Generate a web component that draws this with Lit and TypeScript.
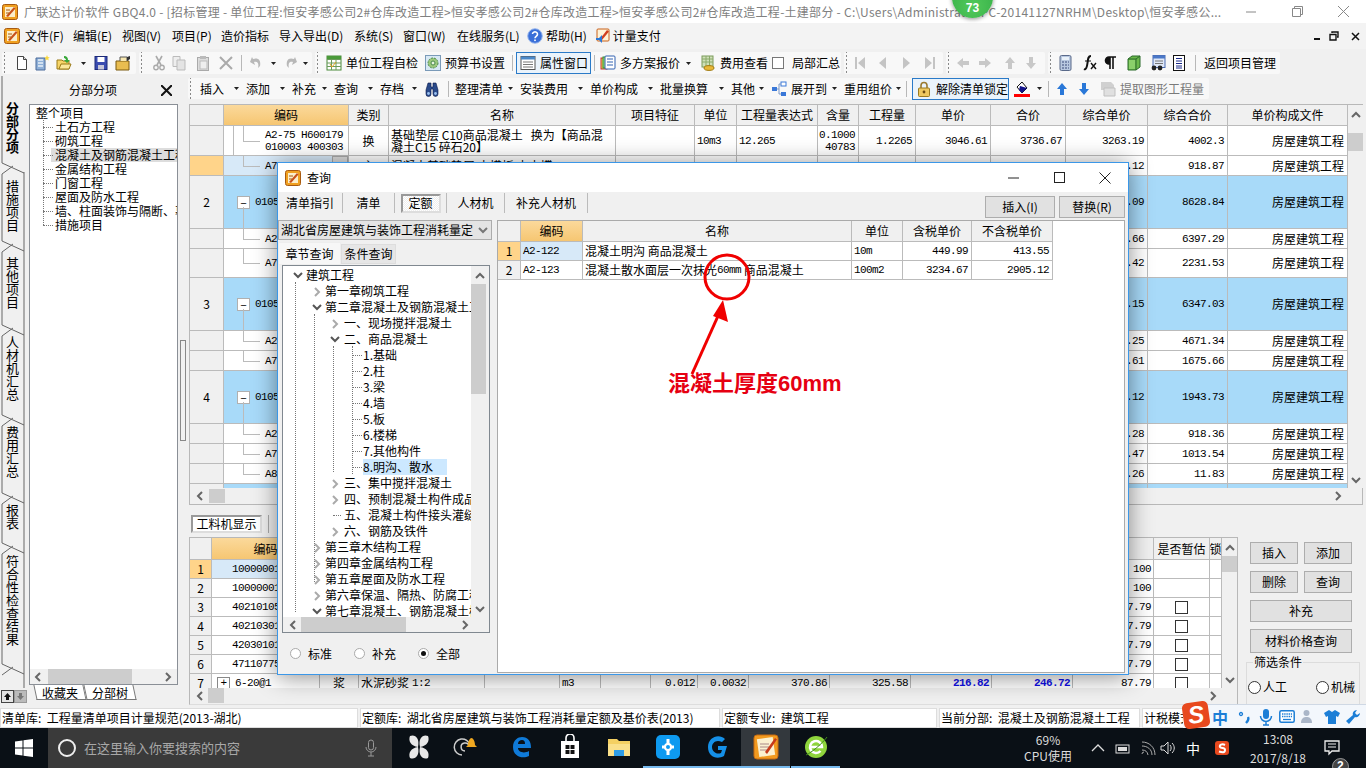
import { LitElement, html, svg, css } from 'lit';
import { customElement } from 'lit/decorators.js';

const box = (s: number, body: unknown) => html`<svg class="ic" width=${s} height=${s} viewBox="0 0 16 16">${body}</svg>`;
const chevR = (c = '#666') => html`<svg class="ch" width="8" height="10" viewBox="0 0 8 10"><path d="M2 1l4 4-4 4" fill="none" stroke=${c} stroke-width="2"/></svg>`;
const chevL = (c = '#666') => html`<svg class="ch" width="8" height="10" viewBox="0 0 8 10"><path d="M6 1L2 5l4 4" fill="none" stroke=${c} stroke-width="2"/></svg>`;
const chevD = (c = '#666') => html`<svg class="ch" width="10" height="8" viewBox="0 0 10 8"><path d="M1 2l4 4 4-4" fill="none" stroke=${c} stroke-width="2"/></svg>`;
const chevU = (c = '#666') => html`<svg class="ch" width="10" height="8" viewBox="0 0 10 8"><path d="M1 6l4-4 4 4" fill="none" stroke=${c} stroke-width="2"/></svg>`;
const arrow = html`<svg class="ar" width="5" height="3" viewBox="0 0 5 3"><path d="M0 0h5L2.5 3z" fill="#222"/></svg>`;

const appIcon = html`<svg class="ic" width="16" height="16" viewBox="0 0 16 16"><rect x=".5" y=".5" width="15" height="15" rx="2" fill="#f0a020" stroke="#a85a10"/><rect x="3" y="3" width="10" height="10" fill="#fbeecb"/><path d="M4 12l8-9 1.5 1.5L6 13z" fill="#c8501a"/><path d="M4 6h4M4 9h3" stroke="#a85a10"/></svg>`;
const ic = {
  doc: box(16, svg`<path d="M3.5 1.5h6l3 3v10h-9z" fill="#fff" stroke="#444"/><path d="M9.5 1.5v3h3" fill="#ddd" stroke="#444"/>`),
  bld: box(16, svg`<path d="M2 3h9v12H2z" fill="#8fb0d8" stroke="#4a6a9a"/><path d="M4 5h5M4 8h5M4 11h5" stroke="#e8f0f8" stroke-width="1.4"/><path d="M13 0l.8 2 2 .4-1.6 1.2.6 2-1.8-1-1.8 1 .6-2-1.6-1.2 2-.4z" fill="#f8d840"/>`),
  open: box(16, svg`<path d="M1 5h5l1 1h6v8H1z" fill="#f7d568" stroke="#9a7a18"/><path d="M3 14l2-5h10l-2 5z" fill="#fbe89a" stroke="#9a7a18"/><path d="M8 1c3 0 4 2 4 4h2l-3 3-3-3h2c0-1-1-2-2-2z" fill="#39a83a"/>`),
  save: box(16, svg`<rect x="2" y="1.5" width="12" height="13" fill="#3a4cb0" stroke="#1c2a78"/><rect x="4.5" y="2" width="7" height="5" fill="#fff"/><rect x="5" y="10" width="6" height="4.5" fill="#c8c8d8"/>`),
  folder: box(16, svg`<path d="M1 6h13v9H1z" fill="#e9bd50" stroke="#7a5a10"/><path d="M5 6V2h7v4" fill="#f8e8b0" stroke="#555"/><path d="M12 2l3-1v3l-3 2z" fill="#333"/>`),
  cut: box(16, svg`<path d="M5 1l5 9M11 1L6 10" stroke="#aaa" stroke-width="1.6"/><circle cx="5" cy="12.5" r="2.2" fill="none" stroke="#aaa" stroke-width="1.4"/><circle cx="11" cy="12.5" r="2.2" fill="none" stroke="#aaa" stroke-width="1.4"/>`),
  copy: box(16, svg`<path d="M2 1.5h7v10H2z" fill="#eee" stroke="#bbb"/><path d="M6 5h8v10H6z" fill="#e4e4e4" stroke="#bbb"/>`),
  paste: box(16, svg`<rect x="2.5" y="2.5" width="11" height="13" fill="#ddd" stroke="#aaa"/><rect x="5" y="1" width="6" height="3" fill="#bbb"/><rect x="5" y="6" width="7" height="8" fill="#eee" stroke="#bbb"/>`),
  del: box(16, svg`<path d="M2 2l12 12M14 2L2 14" stroke="#aaa" stroke-width="2"/>`),
  undo: box(16, svg`<path d="M5 4c6-2 8 2 7 7l-2 2c1-4 0-7-4-6l1 3-5-3 2-5z" fill="#b8b8b8"/>`),
  redo: box(16, svg`<path d="M11 4C5 2 3 6 4 11l2 2c-1-4 0-7 4-6l-1 3 5-3-2-5z" fill="#b8b8b8"/>`),
  table: box(16, svg`<rect x="1" y="1" width="14" height="14" fill="#fff" stroke="#4a8a3a"/><path d="M1 4.5h14M1 8h14M1 11.5h14M5.5 4v11M10 4v11" stroke="#6a9a5a"/><rect x="1" y="1" width="14" height="3" fill="#4a9a3a"/><path d="M4 9l2 3 4-5" stroke="#e0a020" fill="none"/>`),
  gear: box(16, svg`<rect x=".5" y=".5" width="15" height="15" fill="#d8e8f4" stroke="#7a9ab8"/><circle cx="8" cy="8" r="5" fill="#9cc87c" stroke="#4a8a4a" stroke-dasharray="2 1"/><circle cx="8" cy="8" r="2" fill="#e8f4e0" stroke="#4a8a4a"/>`),
  prop: box(16, svg`<rect x="1" y="1.5" width="14" height="13" fill="#fff" stroke="#555"/><rect x="1" y="1.5" width="14" height="3" fill="#4a88c8"/><path d="M3 7h10M3 9.5h10M3 12h10" stroke="#777"/>`),
  plan: box(16, svg`<rect x="1" y="3" width="6" height="11" fill="#f4d060" stroke="#c03030"/><rect x="3" y="2" width="6" height="11" fill="#a0e080" stroke="#309030"/><rect x="5" y="1" width="10" height="13" rx="1" fill="#fff" stroke="#3060b0"/><path d="M7 4h6M7 7h6M7 10h6" stroke="#3060b0"/>`),
  fee: box(16, svg`<rect x="2" y="1" width="11" height="11" fill="#cfe0b8" stroke="#7a9a5a"/><path d="M2 4h11M2 7h11M6 1v11M9.5 1v11" stroke="#8aaa6a"/><ellipse cx="9" cy="13" rx="5" ry="2.4" fill="#e8b838" stroke="#a07a10"/>`),
  first: box(16, svg`<path d="M3 2h2v12H3z M13 2v12L6 8z" fill="#c4c4c4"/>`),
  prev: box(16, svg`<path d="M11 2v12L4 8z" fill="#c4c4c4"/>`),
  next: box(16, svg`<path d="M5 2v12l7-6z" fill="#c4c4c4"/>`),
  last: box(16, svg`<path d="M11 2h2v12h-2z M3 2v12l7-6z" fill="#c4c4c4"/>`),
  aL: box(16, svg`<path d="M8 3L2 8l6 5v-3h6V6H8z" fill="#c8c8c8"/>`),
  aR: box(16, svg`<path d="M8 3l6 5-6 5v-3H2V6h6z" fill="#c8c8c8"/>`),
  aU: box(16, svg`<path d="M8 2l5 6h-3v6H6V8H3z" fill="#c8c8c8"/>`),
  aD: box(16, svg`<path d="M8 14l5-6h-3V2H6v6H3z" fill="#c8c8c8"/>`),
  calc: box(16, svg`<rect x="3" y="0.5" width="11" height="15" rx="1.5" fill="#b8c8e0" stroke="#5a6a8a"/><rect x="5" y="2" width="7" height="3" fill="#e8f0f8"/><path d="M5 7h2M8 7h2M11 7h1M5 10h2M8 10h2M11 10h1M5 13h2M8 13h2M11 13h1" stroke="#3a4a7a"/>`),
  fx: box(16, svg`<path d="M9 1C6 1 6 4 5.5 8S4 15 2 14" fill="none" stroke="#111" stroke-width="2"/><path d="M3 6h6" stroke="#111"/><path d="M9 8l5 6M14 8l-5 6" stroke="#111" stroke-width="1.4"/>`),
  para: box(16, svg`<path d="M7 14V2H6a3.5 3.5 0 000 7h1zM10 2v12M6 2h7" fill="#111" stroke="#111" stroke-width="1.6"/>`),
  book: box(16, svg`<path d="M2 4l4-3h8v11l-4 3H2z" fill="#6ab84a" stroke="#2a6a2a"/><path d="M2 4h8v11M10 4l4-3" fill="none" stroke="#2a6a2a"/><rect x="3" y="5" width="6" height="9" fill="#8ad06a"/>`),
  form: box(16, svg`<rect x="3" y="0.5" width="12" height="12" fill="#dfe8f8" stroke="#4a6ab0"/><rect x="3" y="0.5" width="12" height="3" fill="#4a78c8"/><path d="M5 6h8M5 8.5h8" stroke="#777"/><circle cx="4" cy="13" r="2.4" fill="#222"/><circle cx="10" cy="13" r="2.4" fill="#222"/>`),
  list: box(16, svg`<rect x="2.5" y=".5" width="11" height="15" fill="#fff" stroke="#111"/><path d="M5 3.5h6M5 6h6M5 8.5h6M5 11h6M5 13h6" stroke="#1a2a8a"/>`),
  binoc: box(16, svg`<path d="M2 9l2-7h3v4h2V2h3l2 7v4a2 2 0 01-5 0V8H7v5a2 2 0 01-5 0z" fill="#2a4a8a" stroke="#0a1a4a" stroke-width=".6"/><circle cx="4.5" cy="12.5" r="1.4" fill="#9ac0f0"/><circle cx="11.5" cy="12.5" r="1.4" fill="#9ac0f0"/>`),
  tree: box(16, svg`<rect x="1" y="6" width="5" height="4" fill="#3a78d8"/><rect x="10" y="1" width="5" height="4" fill="#fff" stroke="#3a78d8"/><rect x="10" y="11" width="5" height="4" fill="#3a78d8"/><path d="M6 8h2V3h2M8 8v5h2" fill="none" stroke="#7a98c8"/>`),
  lock: box(16, svg`<path d="M5 7V4.5a3 3 0 016 0V7" fill="none" stroke="#9a7a30" stroke-width="1.6"/><rect x="2.5" y="7" width="11" height="8.5" rx="1" fill="#eec860" stroke="#9a7a20"/><circle cx="8" cy="11" r="1.4" fill="#6a4a10"/>`),
  paint: box(16, svg`<path d="M3 6l5-5 5 6-5 5z" fill="#fff" stroke="#111"/><path d="M6 5l7 2-5 5-3-3z" fill="#14148a"/><rect x="0" y="13" width="16" height="3" fill="#f00"/>`),
  up: box(16, svg`<path d="M8 2l5 6h-3v6H6V8H3z" fill="#2a78d8"/>`),
  down: box(16, svg`<path d="M8 14l5-6h-3V2H6v6H3z" fill="#2a78d8"/>`),
  extract: box(16, svg`<path d="M1 1h10l3 3v5H1z" fill="#d0d0d0"/><path d="M4 7h11v8H4z" fill="#e0e0e0" stroke="#c0c0c0"/>`),
  help: box(16, svg`<circle cx="8" cy="8" r="7.3" fill="#3a6fd8" stroke="#9ab8ee"/><path d="M5.5 6a2.5 2.3 0 114 2c-1 .8-1.5 1-1.5 2.3" fill="none" stroke="#fff" stroke-width="1.6"/><rect x="7.2" y="11.5" width="1.6" height="1.6" fill="#fff"/>`),
  pay: box(16, svg`<rect x="2" y="1" width="12" height="12" rx="1" fill="#fff3d8" stroke="#c8601a"/><path d="M5 11l7-9 2 1.5L7 12z" fill="#d04020"/><path d="M1 10h3l3-3v8l-3-3H1z" fill="#2a78d8"/>`),
};

type Tb = { w: number; k?: string; i?: unknown; t?: string; a?: boolean };
const row1a: Tb[] = [
  { w: 9, k: 'grip' }, { w: 20, i: ic.doc }, { w: 22, i: ic.bld }, { w: 21, i: ic.open }, { w: 16, k: 'only', a: true }, { w: 22, i: ic.save }, { w: 24, i: ic.folder },
];
const row1b: Tb[] = [
  { w: 9, k: 'grip' }, { w: 20, i: ic.cut }, { w: 24, i: ic.copy }, { w: 23, i: ic.paste }, { w: 22, i: ic.del }, { w: 8, k: 'sep' }, { w: 18, i: ic.undo }, { w: 17, k: 'only', a: true }, { w: 19, i: ic.redo }, { w: 13, k: 'only', a: true },
];
const row1c: Tb[] = [
  { w: 8, k: 'grip' }, { w: 99, i: ic.table, t: '单位工程自检' }, { w: 86, i: ic.gear, t: '预算书设置' }, { w: 8, k: 'sep' },
  { w: 75, k: 'on', i: ic.prop, t: '属性窗口' }, { w: 6, k: 'sep' }, { w: 98, i: ic.plan, t: '多方案报价', a: true }, { w: 2, k: 'gap' }, { w: 73, i: ic.fee, t: '费用查看' }, { w: 19, k: 'cbw' }, { w: 52, t: '局部汇总' },
];
const row1d: Tb[] = [{ w: 5, k: 'grip' }, { w: 23, i: ic.first }, { w: 23, i: ic.prev }, { w: 24, i: ic.next }, { w: 24, i: ic.last }];
const row1e: Tb[] = [{ w: 6, k: 'grip' }, { w: 22, i: ic.aL }, { w: 25, i: ic.aR }, { w: 21, i: ic.aU }, { w: 25, i: ic.aD }];
const row1f: Tb[] = [
  { w: 6, k: 'grip' }, { w: 25, i: ic.calc }, { w: 21, i: ic.fx }, { w: 23, i: ic.para }, { w: 24, i: ic.book }, { w: 21, i: ic.form }, { w: 22, i: ic.list }, { w: 11, k: 'sep' }, { w: 79, t: '返回项目管理' },
];
const row2: Tb[] = [
  { w: 9, k: 'grip' }, { w: 46, t: '插入', a: true }, { w: 46, t: '添加', a: true }, { w: 42, t: '补充', a: true }, { w: 46, t: '查询', a: true }, { w: 44, t: '存档', a: true }, { w: 23, i: ic.binoc }, { w: 8, k: 'sep' },
  { w: 65, t: '整理清单', a: true }, { w: 70, t: '安装费用', a: true }, { w: 70, t: '单价构成', a: true }, { w: 71, t: '批量换算', a: true }, { w: 40, t: '其他', a: true },
  { w: 73, i: ic.tree, t: '展开到', a: true }, { w: 60, t: '重用组价', a: true }, { w: 11, k: 'sep' },
  { w: 97, k: 'on', i: ic.lock, t: '解除清单锁定' }, { w: 2, k: 'gap' }, { w: 21, i: ic.paint }, { w: 14, k: 'only', a: true }, { w: 5, k: 'sep' }, { w: 22, i: ic.up }, { w: 22, i: ic.down }, { w: 2, k: 'gap' }, { w: 112, k: 'dis', i: ic.extract, t: '提取图形工程量' },
];

const renderTb = (list: Tb[]) => list.map((it) => html`<div class="ti ${it.k ?? ''}" style="width:${it.w}px">${it.i ?? ''}${it.t ? html`<span>${it.t}</span>` : ''}${it.k === 'cbw' ? html`<i class="cb"></i>` : ''}${it.a ? arrow : ''}</div>`);

const menus = [
  ['文件(F)', 48], ['编辑(E)', 49], ['视图(V)', 50], ['项目(P)', 49], ['造价指标', 58], ['导入导出(D)', 75], ['系统(S)', 49], ['窗口(W)', 54], ['在线服务(L)', 72],
] as const;

type Row = { h: number; kind: 'top' | 'sel' | 'par' | 'kid'; rn?: string; code: string; type?: string; name?: string; unit?: string; expr?: string; qty?: string; amt?: string; p?: string; s?: string; cp: string; ct: string };
const rows: Row[] = [
  { h: 30, kind: 'top', code: 'A2-75 H600179\n010003 400303', type: '换', name: '基础垫层 C10商品混凝土\u00a0\u00a0\u00a0换为【商品混凝土C15 碎石20】', unit: '10m3', expr: '12.265', qty: '0.1000\n40783', amt: '1.2265', p: '3046.61', s: '3736.67', cp: '3263.19', ct: '4002.3' },
  { h: 20, kind: 'sel', code: 'A7-1', type: '主', name: '混凝土基础垫层 木模板 木支撑', cp: '813.12', ct: '918.87' },
  { h: 53, kind: 'par', rn: '2', code: '010501', cp: '7636.09', ct: '8628.84' },
  { h: 20, kind: 'kid', code: 'A2-1', cp: '5661.66', ct: '6397.29' },
  { h: 29, kind: 'kid', code: 'A7-2', cp: '1974.42', ct: '2231.53' },
  { h: 53, kind: 'par', rn: '3', code: '010501', cp: '5616.15', ct: '6347.03' },
  { h: 20, kind: 'kid', code: 'A2-2', cp: '4133.25', ct: '4671.34' },
  { h: 20, kind: 'kid', code: 'A7-3', cp: '1482.61', ct: '1675.66' },
  { h: 53, kind: 'par', rn: '4', code: '010501', cp: '1720.12', ct: '1943.73' },
  { h: 20, kind: 'kid', code: 'A2-3', cp: '812.28', ct: '918.36' },
  { h: 20, kind: 'kid', code: 'A7-4', cp: '896.47', ct: '1013.54' },
  { h: 20, kind: 'kid', code: 'A8-1', cp: '10.26', ct: '11.83' },
  { h: 53, kind: 'par', rn: '5', code: '010501', cp: '', ct: '' },
];
const mainHead = ['', '编码', '类别', '名称', '项目特征', '单位', '工程量表达式', '含量', '工程量', '单价', '合价', '综合单价', '综合合价', '单价构成文件'];

const lowCodes = ['10000001', '10000001', '40210105', '40210301', '42030101', '47110775'];
const tree0 = ['土石方工程', '砌筑工程', '混凝土及钢筋混凝土工程', '金属结构工程', '门窗工程', '屋面及防水工程', '墙、柱面装饰与隔断、幕墙工程', '措施项目'];
const dlgTree: [number, 'd' | 'r' | '', string, boolean?][] = [
  [0, 'd', '建筑工程'], [1, 'r', '第一章砌筑工程'], [1, 'd', '第二章混凝土及钢筋混凝土工程'], [2, 'r', '一、现场搅拌混凝土'], [2, 'd', '二、商品混凝土'],
  [3, '', '1.基础'], [3, '', '2.柱'], [3, '', '3.梁'], [3, '', '4.墙'], [3, '', '5.板'], [3, '', '6.楼梯'], [3, '', '7.其他构件'], [3, '', '8.明沟、散水', true],
  [2, 'r', '三、集中搅拌混凝土'], [2, 'r', '四、预制混凝土构件成品'], [2, '', '五、混凝土构件接头灌缝'], [2, 'r', '六、钢筋及铁件'],
  [1, 'r', '第三章木结构工程'], [1, 'r', '第四章金属结构工程'], [1, 'r', '第五章屋面及防水工程'], [1, 'r', '第六章保温、隔热、防腐工程'], [1, 'd', '第七章混凝土、钢筋混凝土模板'],
];
const vTabs: [string, number, boolean?][] = [['分部分项', 63, true], ['措施项目', 94], ['其他项目', 60], ['人材机汇总', 110], ['费用汇总', 58], ['报表', 72], ['符合性检查结果', 94]];

@customElement('app-root')
export class AppRoot extends LitElement {
  static styles = css`
    :host { display: block; width: 1366px; height: 768px; overflow: hidden; font: 12px/16px 'Noto Sans CJK SC', 'Liberation Sans', sans-serif; color: #000; }
    .app { position: relative; width: 1366px; height: 768px; display: flex; flex-direction: column; background: #f0f0f0; overflow: hidden; }
    .ic, .ch, .ar { display: block; flex: none; }
    .mono { font-family: 'Liberation Mono', monospace; font-size: 11px; letter-spacing: -.6px; }

    .title { height: 23px; flex: none; background: #fff; display: flex; align-items: center; color: #808080; white-space: nowrap; font-size: 12px; letter-spacing: .27px; padding-left: 2px; }
    .title .t { margin-left: 6px; width: 1210px; overflow: hidden; }
    .winbtns { display: flex; margin-left: auto; }
    .winbtns div { width: 46px; height: 23px; display: flex; align-items: center; justify-content: center; }
    .menu { height: 26px; flex: none; display: flex; align-items: center; padding-left: 4px; background: #f3f3f3; white-space: nowrap; }
    .menu .m { flex: none; }
    .menu .first { margin-left: 5px; width: 48px; }
    .menu .hp { display: flex; gap: 3px; align-items: center; margin-left: -2px; }
    .menu .pay { margin-left: 8px; display: flex; gap: 2px; align-items: center; }
    .menu .mdi { margin-left: auto; display: flex; align-items: center; gap: 8px; padding-right: 6px; }
    .bar1 { height: 27px; flex: none; display: flex; padding: 3px 0 2px 2px; gap: 3px; box-sizing: border-box; }
    .grp { display: flex; align-items: center; background: #f8f8f8; border-radius: 2px; height: 22px; flex: none; }
    .ti { flex: none; height: 100%; display: flex; align-items: center; gap: 4px; padding-left: 3px; box-sizing: border-box; white-space: nowrap; }
    .ti.only { padding-left: 2px; }
    .ti .ar { margin-left: auto; margin-right: 4px; }
    .ti.grip { background: radial-gradient(circle, #888 .8px, transparent 1.1px) 1px 2px / 3px 4px repeat-y; }
    .ti.sep { justify-content: center; padding: 0; }
    .ti.sep::after { content: ''; width: 1px; height: 16px; background: #b8b8b8; }
    .ti.gap { padding: 0; }
    .ti.on { border: 1px solid #2a7ac8; background: #eaf3fb; padding-left: 3px; height: 22px; }
    .ti.dis { color: #7a7a7a; }
    .ti.cbw { padding-left: 2px; }
    .cb { display: block; flex: none; width: 10px; height: 10px; border: 1px solid #777; background: #fff; }

    .work { flex: 1; min-height: 0; display: flex; }
    .leftc { width: 188px; flex: none; display: flex; position: relative; }
    .vtabs { width: 26px; flex: none; position: relative; padding-top: 20px; box-sizing: border-box; }
    .vtabs > svg { position: absolute; left: 0; top: 0; }
    .vt { display: flex; align-items: center; justify-content: center; font-size: 13px; line-height: 13px; writing-mode: vertical-rl; text-orientation: upright; width: 25px; position: relative; }
    .vt.a { font-weight: 700; }
    .navbtn { position: absolute; left: 1px; bottom: 5px; display: flex; }
    .navbtn div { width: 11px; height: 11px; background: #e4e4e4; border: 1px solid #444; display: flex; align-items: center; justify-content: center; }
    .navbtn div + div { background: #bbb; border-color: #999; }
    .panel { width: 154px; flex: none; display: flex; flex-direction: column; }
    .phead { height: 28px; flex: none; display: flex; align-items: center; justify-content: center; position: relative; padding-right: 20px; box-sizing: border-box; }
    .phead svg { position: absolute; right: 8px; top: 9px; }
    .ptree { width: 149px; margin-left: 3px; height: 581px; flex: none; box-sizing: border-box; border: 1px solid #8a8f96; background: #fff; display: flex; flex-direction: column; }
    .ptbody { flex: 1; overflow: hidden; position: relative; padding: 1px 0 0 6px; white-space: nowrap; }
    .ptbody .r { height: 14px; line-height: 14px; }
    .ptbody .k { padding-left: 19px; position: relative; height: 14px; line-height: 14px; }
    .ptbody .k::before { content: ''; position: absolute; left: 7px; top: 7px; width: 10px; border-top: 1px dotted #777; }
    .ptbody .k::after { content: ''; position: absolute; left: 7px; top: -7px; height: 14px; border-left: 1px dotted #777; }
    .ptbody .k.hl { background: linear-gradient(#ddd, #ddd) 15px 0 no-repeat; }
    .hs { height: 15px; flex: none; background: #f0f0f0; display: flex; align-items: center; position: relative; }
    .vs { width: 15px; flex: none; background: #f0f0f0; position: relative; display: flex; flex-direction: column; align-items: center; justify-content: space-between; padding: 6px 0 4px; box-sizing: border-box; }
    .thumb { position: absolute; background: #cdcdcd; }
    .btabs { display: flex; height: 17px; padding-left: 9px; }
    .btabs div { border: 1px solid #777; border-top: none; padding: 0 6px; font-size: 12px; line-height: 15px; transform: skewX(12deg); background: #fff; height: 15px; box-sizing: border-box; }
    .btabs div span { display: block; transform: skewX(-12deg); }
    .split { position: absolute; left: 180px; top: 264px; width: 4px; height: 99px; border: 1px solid #888; background: #f0f0f0; }

    .rightc { flex: 1; min-width: 0; display: flex; flex-direction: column; }
    .bar2 { height: 28px; flex: none; padding-top: 2px; box-sizing: border-box; }
    .bar2 .grp { width: 1021px; height: 21px; }
    .mframe { height: 401px; flex: none; margin-left: 1px; margin-right: 3px; box-sizing: border-box; border: 1px solid #b8b8b8; display: flex; flex-direction: column; }
    .mbody { height: 383px; flex: none; display: flex; }
    .gridm { width: 1158px; flex: none; overflow: hidden; background: #fff; }
    .grow { display: grid; grid-template-columns: 34px 125px 40px 227px 79px 42px 81px 41px 57px 75px 75px 82px 80px 120px; box-sizing: border-box; }
    .c { border-right: 1px solid #bbb; border-bottom: 1px solid #bbb; box-sizing: border-box; display: flex; align-items: center; overflow: hidden; padding: 0 2px; white-space: pre-line; position: relative; min-width: 0; }
    .c.hd { background: #f0f0f0; justify-content: center; white-space: nowrap; }
    .c.ora { background: linear-gradient(#fbd99b, #f6c672); }
    .c.rn { background: #f0f0f0; justify-content: center; }
    .c.rn.ora { background: #ffd48a; }
    .c.nm { line-height: 12px; }
    .c.ctr { justify-content: center; }
    .c.rt { justify-content: flex-end; text-align: right; padding-right: 3px; }
    .c.blue { background: #a8daf9; }
    .c.pale { background: #d7e9f8; }
    .c.num { line-height: 12px; }
    .tl { position: absolute; background: #bbb; }
    .exp { position: absolute; left: 13px; top: 50%; margin-top: -6px; width: 11px; height: 11px; background: #fff; border: 1px solid #b0b0b0; display: flex; align-items: center; justify-content: center; font-size: 11px; line-height: 10px; }
    .celbtn { position: absolute; right: 0; top: 0; width: 14px; height: 6px; background: #ddd; border: 1px solid #aaa; }

    .ltabs { height: 32px; flex: none; display: flex; align-items: flex-end; padding: 0 0 4px 3px; box-sizing: border-box; gap: 6px; }
    .pressed { background: #fff; border: 2px solid #999; border-right-color: #ddd; border-bottom-color: #ddd; box-sizing: border-box; display: flex; align-items: center; justify-content: center; }
    .ltabs .pressed { width: 71px; height: 18px; }
    .ltabs .vl { width: 1px; height: 18px; background: #aaa; }
    .lower { flex: 1; min-height: 0; display: flex; }
    .lframe { width: 1049px; height: 168px; margin-left: 1px; flex: none; box-sizing: border-box; border: 1px solid #b8b8b8; border-bottom-color: #ddd; display: flex; flex-direction: column; }
    .lbody { height: 150px; flex: none; display: flex; }
    .gridl { width: 1032px; flex: none; overflow: hidden; background: #fff; }
    .lrow { display: grid; grid-template-columns: 22px 108px 39px 126px 75px 41px 50px 47px 51px 81px 81px 81px 81px 81px 56px 12px; height: 19px; }
    .lrow.hd { height: 22px; }
    .lrow .c { padding: 0 2px; white-space: nowrap; }
    .c.bl { color: #1010e8; font-weight: 700; }
    .plus { width: 11px; height: 11px; border: 1px solid #888; display: flex; align-items: center; justify-content: center; line-height: 10px; margin: 0 5px 0 3px; flex: none; background: #fff; }
    .ck { width: 11px; height: 11px; border: 1px solid #333; background: #fff; margin: 0 auto; }
    .side { flex: 1; padding: 5px 0 0 12px; position: relative; }
    .bgrid { display: grid; grid-template-columns: 48px 48px; gap: 7px 6px; width: 102px; }
    .b { background: #e1e1e1; border: 1px solid #adadad; display: flex; align-items: center; justify-content: center; height: 22px; box-sizing: border-box; }
    .b.w { grid-column: 1 / 3; }
    .b.t { height: 24px; }
    .fs { margin: 9px 6px 0 -4px; border: 1px solid #dcdcdc; height: 60px; box-sizing: border-box; position: relative; display: flex; justify-content: space-between; padding: 17px 4px 0 1px; }
    .fs .lg { position: absolute; left: 6px; top: -9px; background: #f0f0f0; padding: 0 1px; }
    .fs .o { display: flex; align-items: center; gap: 2px; height: 14px; }
    .fs .o i { display: block; width: 11px; height: 11px; border: 1px solid #333; border-radius: 50%; background: #fff; }

    .status { height: 20px; flex: none; display: flex; gap: 2px; }
    .status div { background: #fff; border: 1px solid #ddd; box-sizing: border-box; height: 20px; line-height: 18px; white-space: nowrap; overflow: hidden; padding-left: 1px; flex: none; }
    .task { height: 40px; flex: none; background: #0a1016; display: flex; align-items: stretch; color: #fff; position: relative; }
    .start { width: 48px; display: flex; align-items: center; justify-content: center; flex: none; }
    .search { width: 344px; flex: none; background: #3a3a3a; display: flex; align-items: center; color: #a8a8a8; font-size: 13px; position: relative; }
    .search .ring { width: 14px; height: 14px; border: 2px solid #eee; border-radius: 50%; margin: 0 8px 0 10px; flex: none; }
    .search .mic { position: absolute; right: 14px; top: 11px; }
    .tbi { width: 49px; flex: none; display: flex; align-items: center; justify-content: center; box-sizing: border-box; border-bottom: 2px solid transparent; }
    .tbi.run { border-bottom-color: #76b9ed; }
    .tbi.act { background: #33383d; }
    .tray { margin-left: auto; display: flex; align-items: center; flex: none; }
    .cpu { width: 60px; text-align: center; line-height: 16px; color: #ddd; font-size: 12px; margin-right: 10px; }
    .tri { width: 20px; display: flex; align-items: center; justify-content: center; flex: none; }
    .clock { width: 72px; text-align: center; line-height: 19px; color: #ddd; font-size: 12px; margin-left: 6px; }
    .notif { width: 52px; flex: none; display: flex; align-items: center; justify-content: center; position: relative; padding-right: 16px; box-sizing: border-box; }

    .sogou { position: absolute; left: 1183px; top: 704px; width: 183px; height: 24px; background: #f3f7fc; border-top: 1px solid #cfd8e4; box-sizing: border-box; display: flex; align-items: center; color: #1c7ed6; font-weight: 700; font-size: 16px; }
    .sogou .sl { width: 26px; height: 26px; margin-top: -3px; background: #e8491e; border-radius: 5px; transform: rotate(-8deg); color: #fff; font: italic 700 24px/25px 'Liberation Sans', sans-serif; text-align: center; flex: none; }
    .sogou .zh { margin-left: 3px; width: 22px; flex: none; }
    .sogou .ii { width: 21px; flex: none; display: flex; justify-content: center; }

    .ball { position: absolute; left: 952px; top: -23px; width: 41px; height: 41px; border-radius: 50%; background: radial-gradient(circle at 50% 70%, #52c95a, #2fa944); box-shadow: 0 1px 4px rgba(0,0,0,.45); color: #fff; font: 700 12px/14px 'Liberation Sans', sans-serif; text-align: center; box-sizing: border-box; padding-top: 24px; }

    .dlg { position: absolute; left: 277px; top: 162px; width: 852px; height: 513px; box-sizing: border-box; border: 1.5px solid #3b97e8; background: #f0f0f0; box-shadow: 0 2px 22px rgba(0,0,0,.45); display: flex; flex-direction: column; }
    .dt { height: 29px; flex: none; background: #fff; display: flex; align-items: center; padding-left: 7px; gap: 6px; font-size: 12px; }
    .dt .wb { margin-left: auto; display: flex; }
    .dt .wb div { width: 46px; display: flex; justify-content: center; align-items: center; }
    .dtabs { height: 28px; flex: none; display: flex; position: relative; padding-top: 1px; box-sizing: border-box; }
    .dtab { height: 20px; display: flex; align-items: center; justify-content: center; border-right: 1px solid #bbb; flex: none; box-sizing: border-box; }
    .dtab .pressed { width: 40px; height: 19px; background: repeating-conic-gradient(#fff 0 25%, #eee 0 50%) 0 0 / 2px 2px; }
    .dtabs .acts { margin-left: auto; display: flex; gap: 4px; padding: 3px 3px 0 0; }
    .dtabs .b { width: 70px; height: 22px; }
    .dmain { flex: 1; min-height: 0; display: flex; gap: 5px; }
    .dleft { width: 214px; flex: none; display: flex; flex-direction: column; }
    .combo { height: 20px; flex: none; border: 1px solid #acacac; background: #e4e4e4; display: flex; align-items: center; box-sizing: border-box; padding: 0 3px 0 2px; overflow: hidden; white-space: nowrap; justify-content: space-between; }
    .ctabs { display: flex; height: 25px; flex: none; padding-top: 2px; box-sizing: border-box; }
    .ctabs div { display: flex; align-items: center; justify-content: center; box-sizing: border-box; flex: none; }
    .ctabs .s { width: 63px; height: 23px; background: #f7f7f7; border: 1px solid #eee; }
    .ctabs .u { width: 55px; height: 20px; margin-top: 2px; background: #e6e6e6; border: 1px solid #ddd; }
    .dbox { margin-left: 4px; width: 208px; height: 368px; flex: none; box-sizing: border-box; border: 1px solid #808890; display: flex; flex-direction: column; }
    .dbody { flex: 1; min-height: 0; display: flex; }
    .dtree { width: 188px; flex: none; background: #fff; position: relative; overflow: hidden; padding-top: 1px; box-sizing: border-box; white-space: nowrap; }
    .dr { height: 16px; display: flex; align-items: center; position: relative; }
    .dr .sw { position: absolute; top: 4px; }
    .dr .tx { position: absolute; top: 0; line-height: 16px; }
    .dr .tx.hl { background: #cce8ff; padding: 0 14px 0 0; }
    .dl { position: absolute; border-left: 1px dotted #777; width: 0; }
    .dh { position: absolute; border-top: 1px dotted #777; height: 0; }
    .radios { flex: 1; display: flex; align-items: center; padding-left: 12px; }
    .radios .o { display: flex; align-items: center; gap: 7px; width: 64px; }
    .radios i { width: 9px; height: 9px; border: 1px solid #aaa; border-radius: 50%; background: #fff; display: flex; align-items: center; justify-content: center; flex: none; }
    .radios i.on::after { content: ''; width: 5px; height: 5px; background: #111; border-radius: 50%; }
    .dright { width: 628px; height: 453px; flex: none; border: 1px solid #aaa; box-sizing: border-box; background: #fff; overflow: hidden; }
    .drow { display: grid; grid-template-columns: 23px 62px 269px 51px 69px 81px; width: 555px; height: 19px; }
    .drow.hd { height: 21px; }
    .drow .c { white-space: nowrap; }

    .annot { position: absolute; left: 0; top: 0; pointer-events: none; }
    .anntext { position: absolute; left: 668px; top: 372px; color: #e60012; font: 700 22px/24px 'Liberation Sans', 'Noto Sans CJK SC', sans-serif; white-space: nowrap; }
  `;

  private renderMainRow(r: Row) {
    const bg = r.kind === 'par' ? 'blue' : '';
    const codeBg = r.kind === 'sel' ? 'pale' : bg;
    const hasLines = r.kind !== 'par';
    return html`<div class="grow" style="height:${r.h}px">
      <div class="c rn ${r.kind === 'sel' ? 'ora' : ''}">${r.rn ?? ''}</div>
      <div class="c ${codeBg}">
        ${hasLines ? html`<i class="tl" style="left:19px;top:0;width:1px;height:50%"></i><i class="tl" style="left:19px;top:50%;width:17px;height:1px"></i>` : html`<span class="exp">−</span><i class="tl" style="left:19px;top:60%;width:1px;height:40%"></i>`}
        ${r.kind === 'top' ? html`<i class="tl" style="left:9px;top:0;width:1px;height:100%"></i>` : ''}
        <span class="mono" style="margin-left:${hasLines ? 39 : 29}px;line-height:12px">${r.code}</span>
        ${r.kind === 'sel' ? html`<i class="celbtn"></i>` : ''}
      </div>
      <div class="c ctr ${bg}">${r.type ?? ''}</div>
      <div class="c nm ${bg}">${r.name ?? ''}</div>
      <div class="c ${bg}"></div>
      <div class="c ${bg} mono">${r.unit ?? ''}</div>
      <div class="c ${bg} mono">${r.expr ?? ''}</div>
      <div class="c rt num ${bg} mono">${r.qty ?? ''}</div>
      <div class="c rt ${bg} mono">${r.amt ?? ''}</div>
      <div class="c rt ${bg} mono">${r.p ?? ''}</div>
      <div class="c rt ${bg} mono">${r.s ?? ''}</div>
      <div class="c rt ${bg} mono">${r.cp}</div>
      <div class="c rt ${bg} mono">${r.ct}</div>
      <div class="c rt ${bg}">${r.ct ? '房屋建筑工程' : ''}</div>
    </div>`;
  }

  private renderLower() {
    const heads = ['', '编码', '类别', '名称', '规格型号', '单位', '损耗率', '含量', '数量', '定额价', '市场价', '合价', '市场合价', '(%)', '是否暂估', '锁'];
    return html`
      <div class="lrow hd">${heads.map((h, i) => html`<div class="c hd ${i === 1 ? 'ora' : ''}">${h}</div>`)}</div>
      ${lowCodes.map((code, i) => html`<div class="lrow">
        <div class="c rn ${i === 0 ? 'ora' : ''}">${i + 1}</div>
        <div class="c ${i === 0 ? 'pale' : ''} mono" style="padding-left:20px">${code}</div>
        ${Array.from({ length: 11 }, () => html`<div class="c"></div>`)}
        <div class="c rt mono">${i < 2 ? '100' : '87.79'}</div>
        <div class="c">${i > 1 ? html`<i class="ck"></i>` : ''}</div>
        <div class="c"></div>
      </div>`)}
      <div class="lrow">
        <div class="c rn">7</div>
        <div class="c mono"><span class="plus">+</span>6-20@1</div>
        <div class="c ctr">浆</div>
        <div class="c">水泥砂浆 <span class="mono" style="margin-left:3px">1:2</span></div>
        <div class="c"></div>
        <div class="c mono">m3</div>
        <div class="c"></div>
        <div class="c rt mono">0.012</div>
        <div class="c rt mono">0.0032</div>
        <div class="c rt mono">370.86</div>
        <div class="c rt mono">325.58</div>
        <div class="c rt mono bl">216.82</div>
        <div class="c rt mono bl">246.72</div>
        <div class="c rt mono">87.79</div>
        <div class="c"><i class="ck"></i></div>
        <div class="c"></div>
      </div>`;
  }

  private renderVtabOutline() {
    const bs = [163, 241, 325, 415, 493, 543, 664].map((b) => b - 76);
    let p = 'M24 96V612';
    let prev = 0;
    for (const b of bs) {
      p += ` M2 ${prev}V${b}L24 ${b + 10} M2 ${b + 11}L13 ${b + 3}`;
      prev = b + 11;
    }
    return html`<svg width="26" height="632" viewBox="0 0 26 632"><path d=${p} fill="none" stroke="#666"/></svg>`;
  }

  private renderDialog() {
    const lv = [17, 36, 54, 84];
    return html`<div class="dlg">
      <div class="dt">${appIcon}<span>查询</span>
        <div class="wb">
          <div><svg width="11" height="11" viewBox="0 0 11 11"><path d="M0 6h11" stroke="#222"/></svg></div>
          <div><svg width="11" height="11" viewBox="0 0 11 11"><rect x=".5" y=".5" width="10" height="10" fill="none" stroke="#222"/></svg></div>
          <div><svg width="12" height="12" viewBox="0 0 12 12"><path d="M.5.5l11 11M11.5.5l-11 11" stroke="#222"/></svg></div>
        </div>
      </div>
      <div class="dtabs">
        <div class="dtab" style="width:65px">清单指引</div>
        <div class="dtab" style="width:52px">清单</div>
        <div class="dtab" style="width:52px"><div class="pressed">定额</div></div>
        <div class="dtab" style="width:58px">人材机</div>
        <div class="dtab" style="width:83px">补充人材机</div>
        <div class="acts"><div class="b">插入(I)</div><div class="b" style="width:66px">替换(R)</div></div>
      </div>
      <div class="dmain">
        <div class="dleft">
          <div class="combo"><span>湖北省房屋建筑与装饰工程消耗量定</span>${chevD('#777')}</div>
          <div class="ctabs"><div class="s">章节查询</div><div class="u">条件查询</div></div>
          <div class="dbox">
            <div class="dbody">
              <div class="dtree">
                ${dlgTree.map(([l, sw, t, hl]) => html`<div class="dr">
                  ${sw ? html`<span class="sw" style="left:${lv[l] - (sw === 'd' ? 6 : 5) - 1}px">${sw === 'd' ? chevD('#555') : chevR('#aaa')}</span>` : html`<i class="dh" style="left:${l === 3 ? 69 : lv[l] - 4}px;top:8px;width:${l === 3 ? 10 : 8}px"></i>`}
                  <span class="tx ${hl ? 'hl' : ''}" style="left:${(l === 3 ? 80 : l === 2 ? 61 : l === 1 ? 42 : 23)}px">${t}</span>
                </div>`)}
                <i class="dl" style="left:12px;top:16px;height:330px"></i>
                <i class="dl" style="left:31px;top:48px;height:268px"></i>
                <i class="dl" style="left:50px;top:80px;height:126px"></i>
                <i class="dl" style="left:69px;top:80px;height:128px"></i>
              </div>
              <div class="vs" style="width:18px">${chevU()}<i class="thumb" style="left:0;top:18px;width:15px;height:110px"></i>${chevD()}</div>
            </div>
            <div class="hs" style="width:206px"><span style="margin-left:6px">${chevL()}</span><i class="thumb" style="left:18px;top:0;width:105px;height:15px"></i><span style="margin-left:auto;margin-right:20px">${chevR()}</span></div>
          </div>
          <div class="radios">
            <div class="o"><i></i>标准</div><div class="o"><i></i>补充</div><div class="o"><i class="on"></i>全部</div>
          </div>
        </div>
        <div class="dright">
          <div class="drow hd">
            <div class="c hd"></div><div class="c hd ora">编码</div><div class="c hd">名称</div><div class="c hd">单位</div><div class="c hd">含税单价</div><div class="c hd">不含税单价</div>
          </div>
          <div class="drow">
            <div class="c rn ora">1</div><div class="c pale mono">A2-122</div><div class="c">混凝土明沟 商品混凝土</div><div class="c mono">10m</div><div class="c rt mono">449.99</div><div class="c rt mono">413.55</div>
          </div>
          <div class="drow">
            <div class="c rn">2</div><div class="c mono">A2-123</div><div class="c">混凝土散水面层一次抹光<span class="mono">60mm</span>&nbsp;商品混凝土</div><div class="c mono">100m2</div><div class="c rt mono">3234.67</div><div class="c rt mono">2905.12</div>
          </div>
        </div>
      </div>
    </div>`;
  }

  private renderTask() {
    return html`<div class="task">
      <div class="start"><svg width="18" height="18" viewBox="0 0 18 18"><path d="M0 2.5l7.5-1v7H0zM8.5 1.300L18 0v8.500H8.500zM0 9.500h7.500v7l-7.500-1zM8.500 9.500H18V18l-9.500-1.300z" fill="#fff"/></svg></div>
      <div class="search"><i class="ring"></i>在这里输入你要搜索的内容
        <svg class="mic" width="14" height="18" viewBox="0 0 14 18"><rect x="4.5" y="1" width="5" height="10" rx="2.5" fill="none" stroke="#999"/><path d="M2 8a5 5 0 0010 0M7 13v4M4 17h6" fill="none" stroke="#999"/></svg>
      </div>
      <div class="tbi" style="margin-left:2px"><svg width="24" height="26" viewBox="0 0 24 26"><g fill="#e8e8e8"><path d="M11 13C4 12 1 7 3 2c5-2 10 2 8 11zM13 13c7-1 10-6 8-11-5-2-10 2-8 11zM11 13c-7 1-10 6-8 11 5 2 10-2 8-11zM13 13c7 1 10 6 8 11-5 2-10-2-8-11z"/></g></svg></div>
      <div class="tbi" style="margin-left:-2px"><svg width="28" height="28" viewBox="0 0 28 28"><path d="M10 22a8 8 0 118-10M13 18a4 4 0 114-5" fill="none" stroke="#ccc" stroke-width="1.5"/><path d="M16 12c0-4 2-7 3.5-7S23 8 23 12l2 2H14z" fill="#f0a820"/></svg></div>
      <div class="tbi" style="margin-left:6px"><svg width="24" height="24" viewBox="0 0 24 24"><path d="M4 12C4 5 9 2 13 2c6 0 9 4 9 11H9c0 4 6 6 11 3v5c-6 3-16 1-16-9zM9 9h7c0-3-1-4-3-4S9 6 9 9z" fill="#0f7ad8"/></svg></div>
      <div class="tbi"><svg width="22" height="26" viewBox="0 0 22 26"><path d="M2 7h18v17H2z" fill="#fff"/><path d="M7 7V4a4 4 0 018 0v3" fill="none" stroke="#fff" stroke-width="1.6"/><path d="M6.500 11h4v4h-4zM11.500 11h4v4h-4zM6.500 16h4v4h-4zM11.500 16h4v4h-4z" fill="#111"/></svg></div>
      <div class="tbi"><svg width="24" height="22" viewBox="0 0 24 22"><path d="M1 3h9l2 2h11v15H1z" fill="#f4d062"/><rect x="1" y="8" width="22" height="12" fill="#fae08a"/><rect x="7" y="14" width="10" height="6" fill="#2e9ce6"/></svg></div>
      <div class="tbi run"><svg width="26" height="26" viewBox="0 0 26 26"><rect x="1" y="1" width="24" height="24" rx="5" fill="#0e9af0"/><path d="M13 5v16M7 13h12" stroke="#fff" stroke-width="3"/><circle cx="13" cy="13" r="3" fill="#0e9af0" stroke="#fff" stroke-width="2"/></svg></div>
      <div class="tbi run"><svg width="24" height="26" viewBox="0 0 24 26"><path d="M20 5C14-1 3 3 3 13s9 13 16 9l3-10h-9v4h4l-1 3c-5 2-9-2-9-6s4-8 10-5z" fill="#1590e8"/></svg></div>
      <div class="tbi run act"><svg width="26" height="26" viewBox="0 0 26 26"><rect x="1" y="1" width="24" height="24" rx="3" fill="#f29a1f" stroke="#c86a10"/><rect x="5" y="4" width="16" height="18" fill="#fbf0d0" transform="rotate(-8 13 13)"/><path d="M7 10h9M7 13h9M7 16h7" stroke="#a88"/><path d="M12 18L22 4l2 1.5L14 20z" fill="#c83a1a"/></svg></div>
      <div class="tbi run" style="margin-left:1px"><svg width="26" height="28" viewBox="0 0 26 28"><circle cx="13" cy="14" r="11" fill="#8fd43c"/><path d="M7 14h12a6 6 0 10-1.500 4" fill="none" stroke="#fff" stroke-width="2.5"/><path d="M3 22C8 20 20 10 24 4" stroke="#3d8a1a" fill="none"/></svg></div>
      <div class="tray">
        <div class="cpu">69%<br />CPU使用</div>
        <div class="tri"><svg width="14" height="8" viewBox="0 0 14 8"><path d="M1 7l6-6 6 6" fill="none" stroke="#ddd" stroke-width="1.3"/></svg></div>
        <div class="tri" style="width:30px"><svg width="16" height="12" viewBox="0 0 16 12"><rect x="1" y="3" width="13" height="8" fill="none" stroke="#ddd"/><rect x="3" y="5" width="9" height="4" fill="#ddd"/></svg></div>
        <div class="tri"><svg width="16" height="14" viewBox="0 0 16 14"><path d="M2 13a2 2 0 012-2M2 9a6 6 0 016 5M2 5c5 0 10 3 10 9M2 1c7 0 13 5 13 13" fill="none" stroke="#aaa"/></svg></div>
        <div class="tri"><svg width="16" height="14" viewBox="0 0 16 14"><path d="M1 5h3l4-4v12L4 9H1zM10 4c1.500 1.500 1.500 4.500 0 6M12 2c3 3 3 7 0 10" fill="none" stroke="#ddd"/></svg></div>
        <div class="tri" style="width:30px;font-size:14px;color:#fff">中</div>
        <div class="tri" style="width:28px"><svg width="16" height="16" viewBox="0 0 16 16"><rect x="1" y="1" width="14" height="14" rx="3" fill="#e8491e"/><path d="M11 5c-3-1.500-6 0-5 2s5 0 5 3-3 2.500-6 1.500" fill="none" stroke="#fff" stroke-width="2"/></svg></div>
        <div class="clock">13:08<br />2017/8/18</div>
        <div class="notif"><svg width="16" height="16" viewBox="0 0 16 16"><path d="M1 1h14v10H8l-3 3v-3H1z" fill="none" stroke="#eee" stroke-width="1.3"/><path d="M4 4h8M4 7h8" stroke="#eee"/></svg>
          <svg style="position:absolute;left:18px;top:18px" width="17" height="17" viewBox="0 0 17 17"><circle cx="8.5" cy="8.5" r="8" fill="#444" stroke="#ddd" stroke-width=".6"/></svg>
          <span style="position:absolute;left:23px;top:18px;font:700 12px/17px 'Liberation Sans',sans-serif">2</span>
        </div>
      </div>
    </div>`;
  }

  render() {
    return html`<div class="app">
      <div class="title">${appIcon}
        <div class="t">广联达计价软件 GBQ4.0 - [招标管理 - 单位工程:恒安孝感公司2#仓库改造工程&gt;恒安孝感公司2#仓库改造工程&gt;恒安孝感公司2#仓库改造工程-土建部分 - C:\\Users\\Administrator.PC-20141127NRHM\\Desktop\\恒安孝感公...</div>
        <div class="winbtns">
          <div style="margin-left:-2px"><svg width="10" height="10" viewBox="0 0 10 10"><path d="M0 5h10" stroke="#888"/></svg></div>
          <div><svg width="11" height="11" viewBox="0 0 11 11"><path d="M2.500 2.500V.5h8v8h-2M.5 2.500h8v8h-8z" fill="none" stroke="#888"/></svg></div>
          <div><svg width="11" height="11" viewBox="0 0 11 11"><path d="M0 0l11 11M11 0L0 11" stroke="#888"/></svg></div>
        </div>
      </div>
      <div class="menu">${appIcon}
        <div class="m first">${menus[0][0]}</div>
        ${menus.slice(1).map(([m, w]) => html`<div class="m" style="width:${w}px">${m}</div>`)}
        <div class="m hp">${ic.help}<span>帮助(H)</span></div>
        <div class="m pay">${ic.pay}<span>计量支付</span></div>
        <div class="mdi">
          <svg width="8" height="8" viewBox="0 0 8 8"><path d="M1 7h6" stroke="#111" stroke-width="2"/></svg>
          <svg width="10" height="10" viewBox="0 0 10 10"><path d="M3 2V1h6v5H8M1 3.500h6v5.500H1z" fill="none" stroke="#111" stroke-width="1.4"/></svg>
          <svg width="9" height="9" viewBox="0 0 9 9" style="margin-left:4px"><path d="M1 1l7 7M8 1L1 8" stroke="#111" stroke-width="1.5"/></svg>
        </div>
      </div>
      <div class="bar1">
        <div class="grp">${renderTb(row1a)}</div>
        <div class="grp">${renderTb(row1b)}</div>
        <div class="grp">${renderTb(row1c)}</div>
        <div class="grp">${renderTb(row1d)}</div>
        <div class="grp">${renderTb(row1e)}</div>
        <div class="grp">${renderTb(row1f)}</div>
      </div>

      <div class="work">
        <div class="leftc">
          <div class="vtabs">${this.renderVtabOutline()}
            ${vTabs.map(([t, h, a]) => html`<div class="vt ${a ? 'a' : ''}" style="height:${h}px">${t}</div>`)}
            <div class="navbtn">
              <div><svg width="7" height="7" viewBox="0 0 7 7"><path d="M3.500 0L7 4H5v3H2V4H0z" fill="#111"/></svg></div>
              <div><svg width="7" height="7" viewBox="0 0 7 7"><path d="M3.500 7L7 3H5V0H2v3H0z" fill="#777"/></svg></div>
            </div>
          </div>
          <div class="panel">
            <div class="phead">分部分项<svg width="11" height="11" viewBox="0 0 11 11"><path d="M0 0l11 11M11 0L0 11" stroke="#111" stroke-width="2"/></svg></div>
            <div class="ptree">
              <div class="ptbody">
                <div class="r">整个项目</div>
                ${tree0.map((t, i) => html`<div class="k ${i === 2 ? 'hl' : ''}"><span>${t}</span></div>`)}
              </div>
              <div class="hs"><span style="margin-left:4px">${chevL()}</span><i class="thumb" style="left:18px;top:0;width:84px;height:15px"></i><span style="margin-left:auto;margin-right:5px">${chevR()}</span></div>
            </div>
            <div class="btabs"><div><span>收藏夹</span></div><div><span>分部树</span></div></div>
          </div>
          <div class="split"></div>
        </div>

        <div class="rightc">
          <div class="bar2"><div class="grp">${renderTb(row2)}</div></div>
          <div class="mframe">
            <div class="mbody">
              <div class="gridm">
                <div class="grow" style="height:21px">${mainHead.map((h, i) => html`<div class="c hd ${i === 1 ? 'ora' : ''}">${h}</div>`)}</div>
                ${rows.map((r) => this.renderMainRow(r))}
              </div>
              <div class="vs">${chevU()}<i class="thumb" style="left:0;top:28px;width:15px;height:18px"></i>${chevD()}</div>
            </div>
            <div class="hs" style="flex:1"><span style="margin-left:6px">${chevL()}</span><i class="thumb" style="left:19px;top:1px;width:16px;height:14px"></i><span style="margin-left:auto;margin-right:20px">${chevR()}</span></div>
          </div>
          <div class="ltabs"><div class="pressed">工料机显示</div><div class="vl"></div></div>
          <div class="lower">
            <div class="lframe">
              <div class="lbody">
                <div class="gridl">${this.renderLower()}</div>
                <div class="vs">${chevU()}<i class="thumb" style="left:0;top:18px;width:15px;height:16px"></i>${chevD()}</div>
              </div>
              <div class="hs" style="flex:1"><span style="margin-left:6px">${chevL()}</span><i class="thumb" style="left:18px;top:0;width:16px;height:15px"></i><span style="margin-left:auto;margin-right:20px">${chevR()}</span></div>
            </div>
            <div class="side">
              <div class="bgrid">
                <div class="b">插入</div><div class="b">添加</div>
                <div class="b">删除</div><div class="b">查询</div>
                <div class="b w">补充</div><div class="b w t">材料价格查询</div>
              </div>
              <div class="fs"><span class="lg">筛选条件</span><div class="o"><i></i>人工</div><div class="o"><i></i>机械</div></div>
            </div>
          </div>
        </div>
      </div>

      <div class="status">
        <div style="width:358px">清单库:&nbsp;&nbsp;工程量清单项目计量规范(2013-湖北)</div>
        <div style="width:360px">定额库:&nbsp;&nbsp;湖北省房屋建筑与装饰工程消耗量定额及基价表(2013)</div>
        <div style="width:215px">定额专业:&nbsp;&nbsp;建筑工程</div>
        <div style="width:201px">当前分部:&nbsp;&nbsp;混凝土及钢筋混凝土工程</div>
        <div style="width:224px">计税模式</div>
      </div>
      ${this.renderTask()}

      ${this.renderDialog()}
      <svg class="annot" width="1366" height="768" viewBox="0 0 1366 768">
        <circle cx="727" cy="277" r="22" fill="none" stroke="#f00000" stroke-width="3"/>
        <path d="M692 374L718 316" stroke="#f00000" stroke-width="3"/>
        <path d="M723 300l5 22-15-6z" fill="#f00000"/>
      </svg>
      <div class="anntext">混凝土厚度60mm</div>

      <div class="ball">73</div>
      <div class="sogou">
        <div class="sl">S</div><div class="zh">中</div>
        <div class="ii"><svg width="14" height="14" viewBox="0 0 14 14"><circle cx="3" cy="4" r="1.5" fill="none" stroke="#1c7ed6" stroke-width="1.3"/><path d="M10 7c1 2 0 4-2 6" fill="none" stroke="#1c7ed6" stroke-width="2.4"/></svg></div>
        <div class="ii"><svg width="14" height="18" viewBox="0 0 14 18"><rect x="4" y="1" width="6" height="10" rx="3" fill="#1c7ed6"/><path d="M1.500 8a5.500 5.500 0 0011 0M7 14v3M4 17h6" fill="none" stroke="#1c7ed6" stroke-width="1.5"/></svg></div>
        <div class="ii"><svg width="16" height="13" viewBox="0 0 16 13"><rect x=".8" y=".8" width="14.4" height="11.4" rx="1.5" fill="#fff" stroke="#1c7ed6" stroke-width="1.5"/><path d="M3 4h10M3 6.500h10" stroke="#1c7ed6" stroke-width="1.3" stroke-dasharray="1.4 .8"/><path d="M4 9.500h8" stroke="#1c7ed6" stroke-width="1.3"/></svg></div>
        <div class="ii"><svg width="16" height="16" viewBox="0 0 16 16"><circle cx="6.5" cy="4" r="3" fill="#aab6c8"/><path d="M1 14c0-5 3-6 5.500-6S12 9 12 14z" fill="#aab6c8"/></svg></div>
        <div class="ii" style="margin-left:3px"><svg width="16" height="14" viewBox="0 0 16 14"><path d="M5 0l3 2 3-2 5 3-2 4-2-1v8H4V6L2 7 0 3z" fill="#1c7ed6"/></svg></div>
        <div class="ii"><svg width="16" height="16" viewBox="0 0 16 16"><path d="M15 4c0 3-3 5-5 4l-6 7-3-3 7-6C7 4 9 1 12 1l-2 3 2 2 3-2z" fill="#1c7ed6"/></svg></div>
      </div>
    </div>`;
  }
}
